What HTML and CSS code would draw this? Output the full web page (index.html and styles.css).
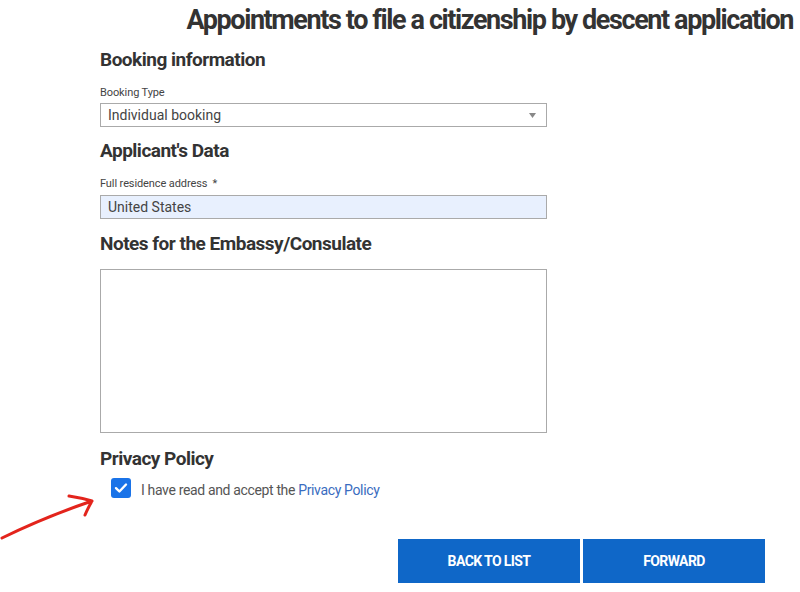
FILE: index.html
```html
<!DOCTYPE html>
<html lang="en">
<head>
<meta charset="utf-8">
<title>Appointments</title>
<link rel="stylesheet" href="styles.css">
</head>
<body>
<div class="page">
  <h1 class="title">Appointments to file a citizenship by descent application</h1>
  <main class="form">
    <h2 class="section s1">Booking information</h2>
    <label class="label">Booking Type</label>
    <div class="field select">
      <span>Individual booking</span>
      <svg class="caret" width="7" height="5" viewBox="0 0 7 5"><path d="M0 0 H7 L3.5 5 Z" fill="#888"/></svg>
    </div>
    <h2 class="section">Applicant's Data</h2>
    <label class="label">Full residence address&nbsp; *</label>
    <div class="field input filled">United States</div>
    <h2 class="section s3">Notes for the Embassy/Consulate</h2>
    <div class="textarea"></div>
    <h2 class="section s4">Privacy Policy</h2>
    <div class="consent">
      <span class="check"><svg width="14" height="12" viewBox="0 0 14 12"><path d="M2 6.2 L5.4 9.5 L12 2.5" fill="none" stroke="#fff" stroke-width="2.4" stroke-linecap="round" stroke-linejoin="round"/></svg></span>
      <span class="consent-text">I have read and accept the <a class="link">Privacy Policy</a></span>
    </div>
    <div class="buttons">
      <button class="btn">BACK TO LIST</button>
      <button class="btn">FORWARD</button>
    </div>
  </main>
  <svg class="arrow" width="100" height="55" viewBox="0 0 100 55"><path d="M2 48 Q45 27 92 11 M69 6 Q82 8 92 11 Q88 18 85 25" fill="none" stroke="#e3241c" stroke-width="3" stroke-linecap="round" stroke-linejoin="round"/></svg>
</div>
</body>
</html>
```
FILE: styles.css
```css
html, body { margin: 0; padding: 0; background: #fff; }
body { font-family: Roboto, "Liberation Sans", sans-serif; color: #333; }
.page { position: relative; width: 800px; height: 592px; overflow: hidden; }
.title { margin: 0; padding: 4px 7px 0 0; text-align: right; font-size: 27px; font-weight: 700; color: #333; line-height: 32px; letter-spacing: -1.4px; }
.form { margin-left: 100px; width: 666px; }
.section { margin: 12px 0 0; font-size: 19px; line-height: 24px; font-weight: 700; color: #333; letter-spacing: -0.5px; }
.s3 { margin-top: 13px; }
.s4 { margin-top: 14px; }
.label { display: block; margin-top: 14px; font-size: 11px; line-height: 14px; color: #444; letter-spacing: -0.1px; }
.field { box-sizing: border-box; width: 447px; height: 24px; border: 1px solid #aaa; display: flex; align-items: center; padding: 0 7px; font-size: 14px; color: #444; }
.select { margin-top: 3px; justify-content: space-between; }
.caret { margin-right: 3px; }
.input { margin-top: 4px; }
.filled { background: #e8f0fe; }
.textarea { box-sizing: border-box; width: 447px; height: 164px; margin-top: 13px; border: 1px solid #aaa; }
.consent { display: flex; align-items: center; margin-top: 7px; padding-left: 11px; height: 20px; }
.check { width: 20px; height: 20px; background: #1a73e8; border-radius: 3px; display: flex; align-items: center; justify-content: center; }
.consent-text { margin-left: 10px; padding-top: 4px; font-size: 14px; color: #555; letter-spacing: -0.35px; }
.link { color: #3a6cc0; }
.buttons { display: flex; gap: 3px; margin-top: 41px; margin-left: 298px; }
.btn { width: 182px; height: 44px; border: 0; background: #0f67c8; color: #fff; font-family: inherit; font-weight: 700; font-size: 14px; letter-spacing: -0.6px; padding: 0; }
.arrow { position: absolute; left: 0; top: 490px; }
```
